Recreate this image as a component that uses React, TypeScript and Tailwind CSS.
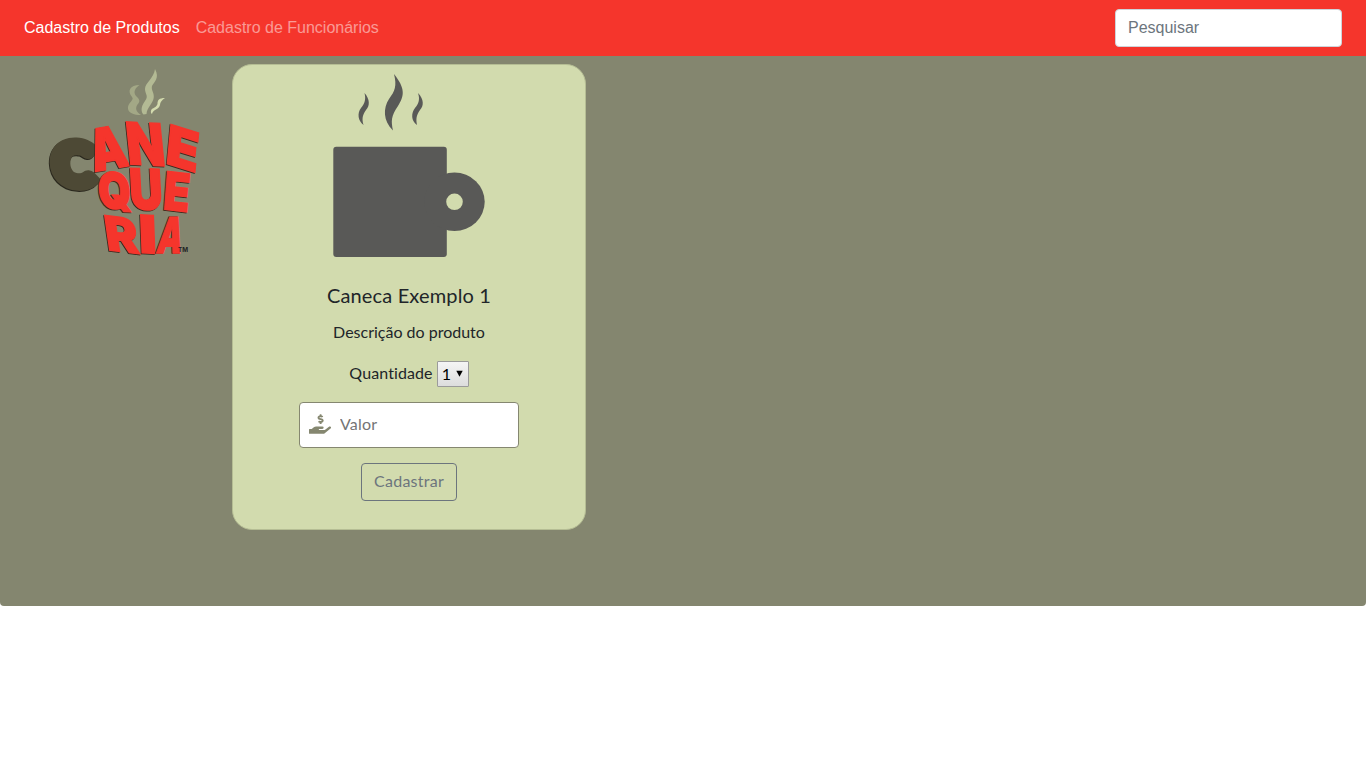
import { FaHandHoldingUsd } from "react-icons/fa";

type Letter = { ch: string; m: string };

const LETTERS: Letter[] = [
  { ch: "A", m: "matrix(.36 -.06 .14 .56 94.500 171.500)" },
  { ch: "N", m: "matrix(.38 .02 .06 .58 128.500 164)" },
  { ch: "E", m: "matrix(.32 .1 -.05 .54 165 163)" },
  { ch: "Q", m: "matrix(.33 .01 .03 .5 99 208)" },
  { ch: "U", m: "matrix(.33 .01 .03 .56 130.500 209)" },
  { ch: "E", m: "matrix(.26 .03 -.04 .52 162.500 209)" },
  { ch: "R", m: "matrix(.33 .04 .07 .48 107.500 250)" },
  { ch: "I", m: "matrix(.18 .01 .02 .52 139.500 252.500)" },
  { ch: "A", m: "matrix(.25 0 -.08 .49 155.500 252.500)" },
];

const glyph = {
  fontSize: 100,
  textLength: 100,
  lengthAdjust: "spacingAndGlyphs" as const,
  strokeWidth: 3,
  strokeLinejoin: "miter" as const,
};

function Logo() {
  return (
    <svg
      className="block h-[214px] w-[232px] shrink-0 font-['Inter'] font-black"
      viewBox="0 56 232 214"
      role="img"
      aria-label="Canequeria"
    >
      <path
        d="M139.500 85C130 85 127 91 132 97C135 100 127 103 128 109C129 113 134 115 141 115C136 112 135 108 137.500 104.500C141 101 139 99 136 96C133 92 135 88 139.500 85Z"
        fill="#a3a886"
      />
      <path
        d="M155 69C154 78 145 83 145 89C145 94 149 96 145 101C140.500 107 141 112 143.500 114.500L146.500 114C147 107 153.500 103 153.800 97C154 92 151 90 152 86C154 82 160 78 155 69Z"
        fill="#b3ba94"
      />
      <path
        d="M165 98C159 98 157.500 100 157.500 104C156 109 150 107 151 113L152 114C153 109 159 110 160 105C160 102 162 100 165 98Z"
        fill="#d3dbae"
      />
      <g className="font-['Lato']">
        <text {...glyph} strokeWidth={18} fill="#29271d" stroke="#29271d" transform="matrix(.41 .02 .02 .58 53 185)">
          C
        </text>
        <text {...glyph} strokeWidth={18} fill="#4d4935" stroke="#4d4935" transform="matrix(.41 .02 .02 .58 53.700 184)">
          C
        </text>
      </g>
      {LETTERS.map((l, i) => (
        <g key={i}>
          <g fill="#3a2a20" stroke="#3a2a20" transform="translate(-.8 .8)">
            <text {...glyph} transform={l.m}>{l.ch}</text>
          </g>
          <text {...glyph} fill="#f5352c" stroke="#f5352c" transform={l.m}>{l.ch}</text>
        </g>
      ))}
      <text x="178" y="252.300" className="font-bold" fontSize="5.500" textLength="10" lengthAdjust="spacingAndGlyphs" fill="#222">
        TM
      </text>
    </svg>
  );
}

function Mug() {
  return (
    <svg className="block h-[192px] w-[160px]" viewBox="329 65 160 192" fill="#595957" aria-hidden="true">
      <path d="M394 74C405 88 405 95 398 106C391 116 391 121 393 130.500C383 121 383 108 389 99C395 91 397 86 394 74Z" />
      <path d="M364.500 93C370 99 370 106 366 110C362 116 362 119 363.500 125C358 121 357 113 361 108C365 103 366 99 364.500 93Z" />
      <path d="M418 93C424 99 424 106 420 110C416 116 416 119 417 125C411 121 411 113 415 108C419 103 420 99 418 93Z" />
      <rect x="333.300" y="146.700" width="113.500" height="110.200" rx="3" />
      <ellipse cx="454.500" cy="201.800" rx="30.200" ry="29.200" />
      <circle cx="454.500" cy="201.800" r="8.300" fill="#d2dbae" />
    </svg>
  );
}

export default function App() {
  return (
    <div className="min-h-screen bg-white text-base leading-6 text-[#212529]">
      <nav className="flex h-14 items-center justify-between bg-[#f5352c] px-6 font-['Liberation_Sans',sans-serif]">
        <div className="flex gap-4">
          <a className="text-white">Cadastro de Produtos</a>
          <a className="text-white/50">Cadastro de Funcionários</a>
        </div>
        <input
          className="h-[38px] w-[227px] rounded border border-[#ced4da] bg-white px-3 placeholder:text-[#6c757d] placeholder:opacity-100"
          placeholder="Pesquisar"
        />
      </nav>
      <main className="flex h-[550px] items-start rounded-b bg-[#84866f]">
        <Logo />
        <section className="mt-2 flex h-[466px] w-[354px] flex-col items-center rounded-[20px] border border-[#b5bd94] bg-[#d2dbae] font-['Lato',sans-serif]">
          <Mug />
          <h5 className="mt-[26px] text-[20px] leading-6 tracking-[0.15px]">Caneca Exemplo 1</h5>
          <p className="mt-[13px]">Descrição do produto</p>
          <label className="mt-[17px] flex h-[26px] items-center gap-1">
            <span className="pb-[2px] tracking-[0.1px]">Quantidade</span>
            <span className="relative flex">
              <select className="h-[26px] w-8 appearance-none rounded-[1px] border border-[#9b9b9b] bg-linear-to-b from-[#f5f5f5] to-[#dddddd] pb-[2px] pl-1 text-black">
                <option>1</option>
              </select>
              <svg className="pointer-events-none absolute top-[9px] left-[19px] h-[7px] w-[7px]" viewBox="0 0 7 7">
                <path d="M.3 .8H6.700L3.500 6.800Z" />
              </svg>
            </span>
          </label>
          <div className="mt-[15px] flex h-[46px] w-[220px] items-center rounded border border-[#858770] bg-white pl-[9px]">
            <FaHandHoldingUsd className="mb-[2px] h-5 w-[22px] shrink-0 text-[#858770]" />
            <input
              className="mb-[2px] ml-[9px] w-40 tracking-[0.2px] placeholder:text-[#757575] placeholder:opacity-100"
              placeholder="Valor"
            />
          </div>
          <button className="mt-[15px] h-[38px] w-24 rounded border border-[#6c757d] pb-[2px] tracking-[0.25px] text-[#6c757d]">
            Cadastrar
          </button>
        </section>
      </main>
    </div>
  );
}
